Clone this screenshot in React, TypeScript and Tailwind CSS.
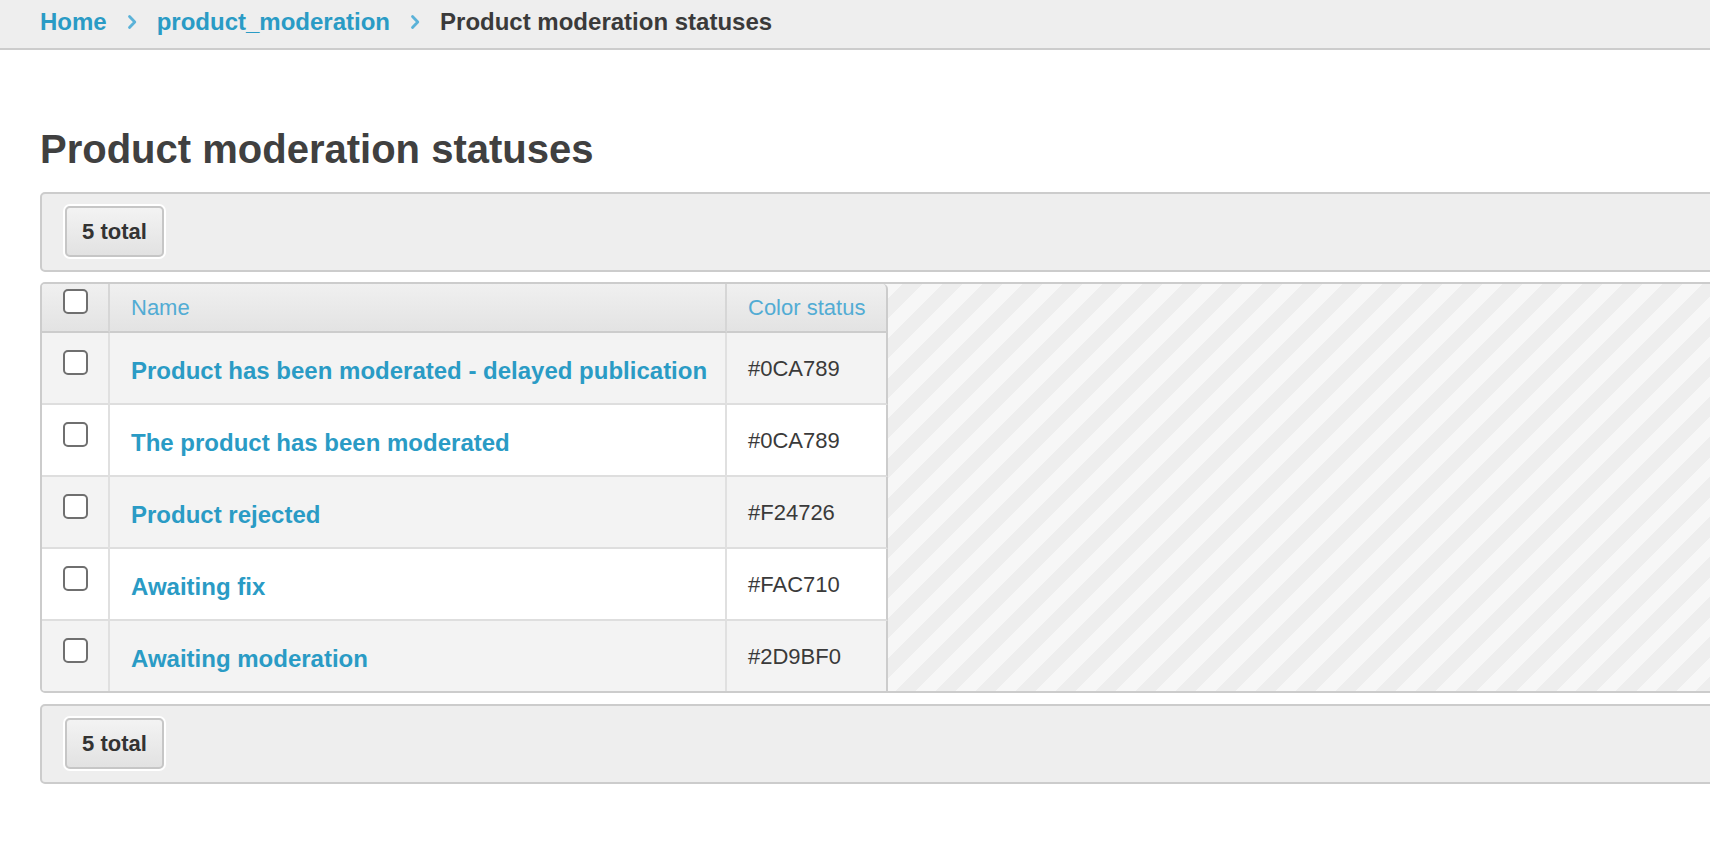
import React from "react";

const rows = [
  { name: "Product has been moderated - delayed publication", color: "#0CA789" },
  { name: "The product has been moderated", color: "#0CA789" },
  { name: "Product rejected", color: "#F24726" },
  { name: "Awaiting fix", color: "#FAC710" },
  { name: "Awaiting moderation", color: "#2D9BF0" },
];

function Chevron() {
  return (
    <svg width="10" height="16" viewBox="0 0 10 16" className="shrink-0">
      <path d="M2.5 2.5 L7.8 8 L2.5 13.5" fill="none" stroke="#5bb2d8" strokeWidth="2.8" strokeLinecap="round" strokeLinejoin="round" />
    </svg>
  );
}

function Checkbox() {
  return <div className="mx-auto h-[25px] w-[25px] rounded-[5px] border-2 border-[#6f6f6f] bg-white" />;
}

function TotalBar() {
  return (
    <div className="-mr-[20px] rounded-[5px] border-2 border-[#cccccc] bg-[#eeeeee] pl-[23px] pt-[12px] pb-[13px]">
      <div className="flex h-[51px] w-[99px] items-center justify-center rounded-[5px] border-2 border-[#c6c6c6] bg-gradient-to-b from-[#f3f3f3] to-[#e2e2e2] text-[22px] font-bold text-[#333333] shadow-[0_0_0_2px_#ffffff]">
        5 total
      </div>
    </div>
  );
}

export default function App() {
  return (
    <div className="min-h-[842px] w-full overflow-hidden bg-white font-['Liberation_Sans',Arial,sans-serif] text-[#404040]">
      <div className="flex h-[50px] items-start border-b-2 border-[#cccccc] bg-[#eeeeee] pl-[40px] pt-[8px]">
        <div className="flex h-[28px] items-center gap-[20px] text-[24px] font-bold leading-[28px]">
          <span className="text-[#2a9bc5]">Home</span>
          <Chevron />
          <span className="text-[#2a9bc5]">product_moderation</span>
          <Chevron />
          <span className="text-[#3a3a3a]">Product moderation statuses</span>
        </div>
      </div>

      <div className="pl-[40px]">
        <h1 className="mt-[76px] text-[40px] font-bold leading-[46px] text-[#404040]">Product moderation statuses</h1>

        <div className="mt-[20px]">
          <TotalBar />
        </div>

        <div className="-mr-[20px] mt-[10px] overflow-hidden rounded-[5px] border-2 border-[#cccccc] bg-[repeating-linear-gradient(135deg,#f7f7f7_0px,#f7f7f7_14px,#eeeeee_14px,#eeeeee_28.3px)]">
          <table className="border-separate border-spacing-0">
            <thead>
              <tr className="h-[49px]">
                <th className="w-[68px] border-b-2 border-r-2 border-b-[#cccccc] border-r-[#d6d6d6] bg-gradient-to-b from-[#f0f0f0] to-[#e3e3e3] pt-[5px] align-top">
                  <Checkbox />
                </th>
                <th className="w-[617px] border-b-2 border-r-2 border-b-[#cccccc] border-r-[#d6d6d6] bg-gradient-to-b from-[#f0f0f0] to-[#e3e3e3] pl-[21px] text-left align-middle text-[22px] font-normal text-[#52acd4]">
                  Name
                </th>
                <th className="w-[161px] rounded-tr-[5px] border-b-2 border-r-2 border-[#cccccc] bg-gradient-to-b from-[#f0f0f0] to-[#e3e3e3] pl-[21px] text-left align-middle text-[22px] font-normal text-[#52acd4]">
                  Color status
                </th>
              </tr>
            </thead>
            <tbody>
              {rows.map((r, i) => {
                const last = i === rows.length - 1;
                const bg = i % 2 === 0 ? "bg-[#f3f3f3]" : "bg-white";
                const bb = last ? "" : "border-b-2 border-b-[#dedede]";
                return (
                  <tr key={i} className={last ? "h-[70px]" : "h-[72px]"}>
                    <td className={`${bg} ${bb} border-r-2 border-r-[#e0e0e0] pt-[17px] align-top`}>
                      <Checkbox />
                    </td>
                    <td className={`${bg} ${bb} border-r-2 border-r-[#e0e0e0] pl-[21px] pt-[5px] align-middle text-[24px] font-bold text-[#2a9bc5]`}>
                      {r.name}
                    </td>
                    <td className={`${bg} ${bb} border-r-2 border-r-[#cccccc] pl-[21px] align-middle text-[22px] text-[#3a3a3a]`}>
                      {r.color}
                    </td>
                  </tr>
                );
              })}
            </tbody>
          </table>
        </div>

        <div className="mt-[11px]">
          <TotalBar />
        </div>
      </div>
    </div>
  );
}
